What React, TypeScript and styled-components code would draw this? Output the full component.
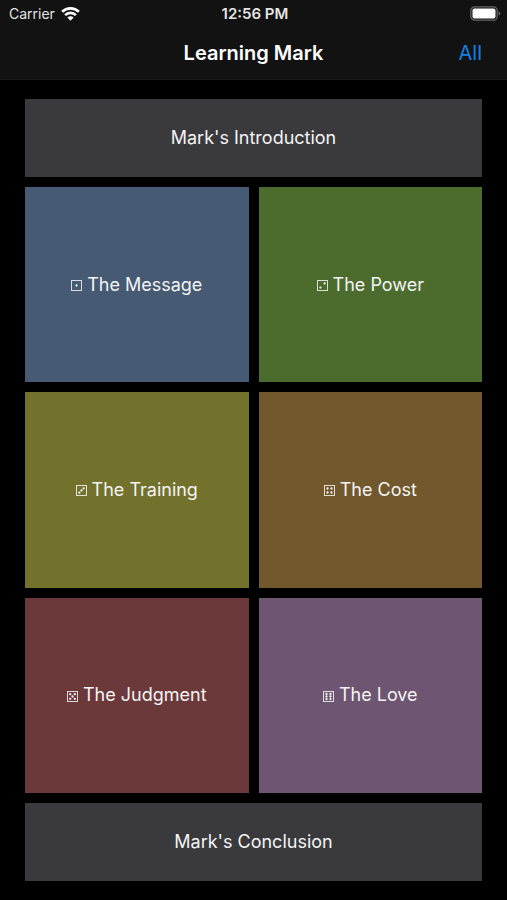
import React from "react";
import styled, { createGlobalStyle } from "styled-components";

const GlobalStyle = createGlobalStyle`
  * { box-sizing: border-box; }
  body {
    margin: 0;
    background: #000;
    color: #f4f4f5;
    font-family: Inter, "Liberation Sans", sans-serif;
  }
`;

const Screen = styled.div`
  display: flex;
  flex-direction: column;
  min-height: 100vh;
`;

const Header = styled.header`
  background: #121212;
  border-bottom: 1px solid #1c1c1c;
`;

const StatusBar = styled.div`
  display: grid;
  grid-template-columns: 1fr auto 1fr;
  align-items: center;
  height: 27px;
  padding: 0 6px 0 9px;
  font-size: 14px;
  line-height: 20px;
  color: #e4e4e4;
`;

const Carrier = styled.span`
  display: flex;
  align-items: center;
  gap: 6px;
`;

const Clock = styled.time`
  font-size: 15px;
  font-weight: 600;
`;

const Battery = styled.svg`
  justify-self: end;
`;

const NavBar = styled.div`
  display: grid;
  grid-template-columns: 1fr auto 1fr;
  align-items: center;
  height: 52px;
  padding: 0 25px;
`;

const Title = styled.h1`
  grid-column: 2;
  margin: 0;
  font-size: 20px;
  line-height: 24px;
  font-weight: 600;
  color: #fff;
`;

const AllButton = styled.button`
  justify-self: end;
  padding: 0;
  border: 0;
  background: none;
  color: #1680e4;
  font: inherit;
  font-size: 20px;
  line-height: 24px;
  cursor: pointer;
`;

const Sections = styled.main`
  flex: 1;
  display: grid;
  grid-template-columns: 1fr 1fr;
  grid-template-rows: 2fr 5fr 5fr 5fr 2fr;
  gap: 10px;
  padding: 19px 25px;
`;

const Tile = styled.button<{ $color: string; $wide?: boolean }>`
  grid-column: ${(p) => (p.$wide ? "1 / -1" : "auto")};
  display: flex;
  align-items: center;
  justify-content: center;
  gap: 5px;
  padding: 8px;
  border: 0;
  background: ${(p) => p.$color};
  color: #f4f4f5;
  font: inherit;
  font-size: 18px;
  line-height: 24px;
  cursor: pointer;
`;

const DieIcon = styled.svg`
  flex: none;
  margin-top: 2px;
`;

const pips: Record<number, [number, number][]> = {
  1: [[5.5, 5.5]],
  2: [[7.6, 3.4], [3.4, 7.6]],
  3: [[7.7, 3.3], [5.5, 5.5], [3.3, 7.7]],
  4: [[3.5, 3.5], [7.5, 3.5], [3.5, 7.5], [7.5, 7.5]],
  5: [[3.2, 3.2], [7.8, 3.2], [5.5, 5.5], [3.2, 7.8], [7.8, 7.8]],
  6: [[3.5, 2.9], [7.5, 2.9], [3.5, 5.5], [7.5, 5.5], [3.5, 8.1], [7.5, 8.1]],
};

function Die({ value }: { value: number }) {
  return (
    <DieIcon width="11" height="11" viewBox="0 0 11 11" aria-hidden="true">
      <rect x="0.5" y="0.5" width="10" height="10" fill="none" stroke="currentColor" strokeOpacity="0.85" />
      {pips[value].map(([x, y]) => (
        <circle key={`${x}-${y}`} cx={x} cy={y} r="1.15" fill="currentColor" />
      ))}
    </DieIcon>
  );
}

const topics = [
  { label: "The Message", color: "#465a73" },
  { label: "The Power", color: "#4c6c2e" },
  { label: "The Training", color: "#72722d" },
  { label: "The Cost", color: "#72592d" },
  { label: "The Judgment", color: "#6c393b" },
  { label: "The Love", color: "#6e5672" },
];

export default function App() {
  return (
    <Screen>
      <GlobalStyle />
      <Header>
        <StatusBar>
          <Carrier>
            Carrier
            <svg width="19" height="14" viewBox="0 0 19 14" role="img" aria-label="Wi-Fi">
              <g fill="none" stroke="#fff" strokeWidth="2.6">
                <path d="M1.1 4.8 A12 12 0 0 1 17.9 4.8" />
                <path d="M4.1 8.1 A7.6 7.6 0 0 1 14.9 8.1" />
              </g>
              <path d="M6.4 10.6 A4.4 4.4 0 0 1 12.6 10.6 L9.5 13.8 Z" fill="#fff" />
            </svg>
          </Carrier>
          <Clock>12:56 PM</Clock>
          <Battery width="31" height="15" viewBox="0 0 31 15" role="img" aria-label="Battery full">
            <rect x="0.8" y="0.8" width="26.4" height="13.4" rx="4" fill="none" stroke="#666" strokeWidth="1.3" />
            <rect x="2.5" y="2.5" width="23" height="10" rx="2" fill="#fff" />
            <path d="M28.6 5.2 Q30.4 6 30.4 7.5 Q30.4 9 28.6 9.8 Z" fill="#666" />
          </Battery>
        </StatusBar>
        <NavBar>
          <Title>Learning Mark</Title>
          <AllButton type="button">All</AllButton>
        </NavBar>
      </Header>
      <Sections>
        <Tile type="button" $color="#3a3a3c" $wide>Mark's Introduction</Tile>
        {topics.map((topic, index) => (
          <Tile key={topic.label} type="button" $color={topic.color}>
            <Die value={index + 1} />
            {topic.label}
          </Tile>
        ))}
        <Tile type="button" $color="#3a3a3c" $wide>Mark's Conclusion</Tile>
      </Sections>
    </Screen>
  );
}
